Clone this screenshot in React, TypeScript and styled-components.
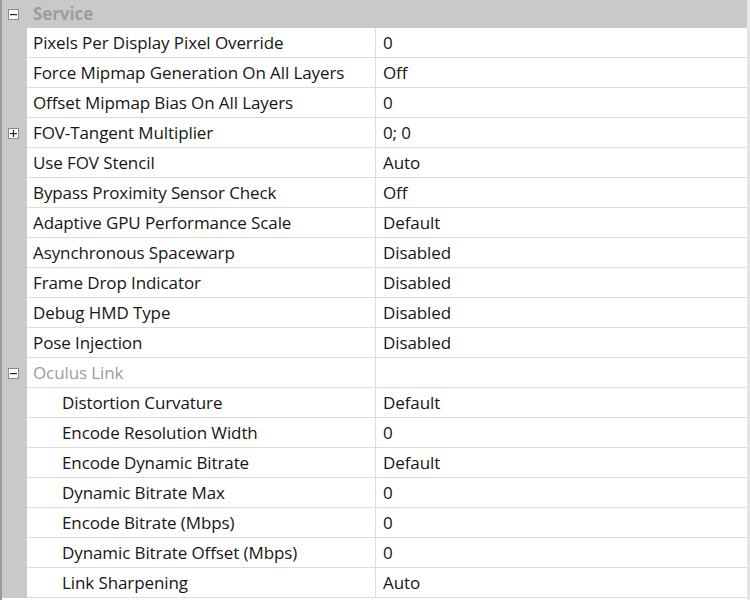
import styled, { createGlobalStyle } from 'styled-components';

const GlobalStyle = createGlobalStyle`
  html, body {
    margin: 0;
    padding: 0;
    background: #ffffff;
  }
  body {
    font-family: 'Open Sans', 'Noto Sans', 'Liberation Sans', sans-serif;
  }
`;

type Prop = { name: string; value: string; expandable?: boolean };

const service: Prop[] = [
  { name: 'Pixels Per Display Pixel Override', value: '0' },
  { name: 'Force Mipmap Generation On All Layers', value: 'Off' },
  { name: 'Offset Mipmap Bias On All Layers', value: '0' },
  { name: 'FOV-Tangent Multiplier', value: '0; 0', expandable: true },
  { name: 'Use FOV Stencil', value: 'Auto' },
  { name: 'Bypass Proximity Sensor Check', value: 'Off' },
  { name: 'Adaptive GPU Performance Scale', value: 'Default' },
  { name: 'Asynchronous Spacewarp', value: 'Disabled' },
  { name: 'Frame Drop Indicator', value: 'Disabled' },
  { name: 'Debug HMD Type', value: 'Disabled' },
  { name: 'Pose Injection', value: 'Disabled' },
];

const link: Prop[] = [
  { name: 'Distortion Curvature', value: 'Default' },
  { name: 'Encode Resolution Width', value: '0' },
  { name: 'Encode Dynamic Bitrate', value: 'Default' },
  { name: 'Dynamic Bitrate Max', value: '0' },
  { name: 'Encode Bitrate (Mbps)', value: '0' },
  { name: 'Dynamic Bitrate Offset (Mbps)', value: '0' },
  { name: 'Link Sharpening', value: 'Auto' },
];

const Toggle = ({ open }: { open: boolean }) => (
  <ToggleBox>
    <svg width="11" height="11" viewBox="0 0 11 11">
      <rect x="0.5" y="0.5" width="10" height="10" fill="#fff" stroke="#8a8a8a" />
      <rect x="2" y="5" width="7" height="1.2" fill="#222" />
      {!open && <rect x="4.9" y="2" width="1.2" height="7" fill="#222" />}
    </svg>
  </ToggleBox>
);

const App = () => {
  return (
    <>
      <GlobalStyle />
      <Grid>
        <CategoryRow $shaded>
          <Gutter>
            <Toggle open />
          </Gutter>
          <CategoryLabel $bold>Service</CategoryLabel>
        </CategoryRow>
        {service.map((p) => (
          <Row key={p.name}>
            <Gutter>{p.expandable && <Toggle open={false} />}</Gutter>
            <Name>{p.name}</Name>
            <Value>{p.value}</Value>
          </Row>
        ))}
        <Row>
          <Gutter>
            <Toggle open />
          </Gutter>
          <CategoryLabel>Oculus Link</CategoryLabel>
          <Value />
        </Row>
        {link.map((p) => (
          <Row key={p.name}>
            <Gutter />
            <Name $indent>{p.name}</Name>
            <Value>{p.value}</Value>
          </Row>
        ))}
      </Grid>
    </>
  );
};

export default App;

const Grid = styled.div`
  width: 745px;
  height: 600px;
  border-left: 2px solid #9a9a9a;
  border-right: 3px solid #e6e6e6;
  background: #fff;
  overflow: hidden;
  display: flex;
  flex-direction: column;
  color: #161616;
  font-size: 17px;
  letter-spacing: -0.1px;
`;

const Row = styled.div`
  display: grid;
  grid-template-columns: 25px 348px 1fr;
  height: 30px;
  flex: none;
  box-sizing: border-box;
  border-bottom: 1px solid #dcdcdc;
  background: #fff;
`;

const CategoryRow = styled(Row)<{ $shaded?: boolean }>`
  grid-template-columns: 25px 1fr;
  height: 28px;
  background: ${({ $shaded }) => ($shaded ? '#c9c9c9' : '#fff')};
  border-bottom: 1px solid #c9c9c9;
`;

const Gutter = styled.div`
  background: #c9c9c9;
  display: flex;
  align-items: center;
  justify-content: flex-start;
  padding-left: 6px;
  margin-bottom: -1px;
`;

const ToggleBox = styled.span`
  display: inline-flex;
  width: 11px;
  height: 11px;
`;

const Name = styled.div<{ $indent?: boolean }>`
  display: flex;
  align-items: center;
  padding-left: ${({ $indent }) => ($indent ? '35px' : '6px')};
  white-space: nowrap;
  overflow: hidden;
`;

const CategoryLabel = styled.div<{ $bold?: boolean }>`
  display: flex;
  align-items: center;
  padding-left: 6px;
  color: #9d9d9d;
  font-weight: ${({ $bold }) => ($bold ? 700 : 400)};
`;

const Value = styled.div`
  display: flex;
  align-items: center;
  padding-left: 7px;
  border-left: 1px solid #dcdcdc;
`;
